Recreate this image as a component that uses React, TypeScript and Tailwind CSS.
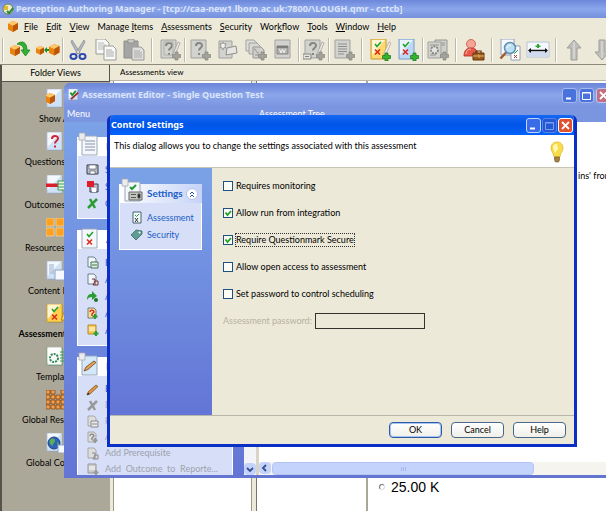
import type { ReactNode } from "react";
import clsx from "clsx";

const UI_FONT = "font-['Lato',sans-serif]";
const TITLE_FONT = "font-['Noto_Sans',sans-serif]";

type IconProps = { className?: string };

type BadgeProps = { gray?: boolean };

function PlusBadge({ gray }: BadgeProps) {
  return (
    <path
      d="M15 12h3v2.500h2.500v3H18V20h-3v-2.500h-2.500v-3H15z"
      fill={gray ? "#a3a39c" : "#35b52c"}
      stroke={gray ? "#85857e" : "#14701a"}
      strokeWidth=".7"
    />
  );
}

function Cube({ x, y, s = 1 }: { x: number; y: number; s?: number }) {
  return (
    <g transform={`translate(${x} ${y}) scale(${s})`}>
      <path d="M0 2.500 5 0l5 2v6L5 11 0 8.500z" fill="#e88310" />
      <path d="M0 2.500 5 0l5 2-5 2.800z" fill="#ffc768" />
      <path d="M5 4.800 10 2v6L5 11z" fill="#b95608" />
    </g>
  );
}

type SheetProps = {
  fill?: string;
  edge?: string;
  className?: string;
  children?: ReactNode;
};

// Document page with a soft shadow, the base of most icons here
function Sheet({ fill = "#cfe1f6", edge = "#a9bbd6", className = "size-5", children }: SheetProps) {
  return (
    <svg viewBox="0 0 20 20" className={clsx("shrink-0", className)} aria-hidden="true">
      <path d="M2 1h15v18H2z" fill="#77808c" opacity=".4" />
      <path d="M1 0h15v18H1z" fill={fill} stroke={edge} strokeWidth=".8" />
      <path d="M1.500.5H15L1.500 15z" fill="#fff" opacity=".75" />
      {children}
    </svg>
  );
}

function Marks() {
  return (
    <>
      <path d="m6 5 2 2.500L12 3" fill="none" stroke="#23a32b" strokeWidth="1.600" />
      <path d="m6 10.500 5 5m0-5-5 5" fill="none" stroke="#dc2d1e" strokeWidth="1.600" />
    </>
  );
}

function CubesArrowIcon() {
  return (
    <svg viewBox="0 0 22 20" className="h-5 w-[22px]" aria-hidden="true">
      <Cube x={1} y={5} />
      <path d="M8 4c5-4 10-2 10 6h3l-4.500 6-4.500-6h2.500c0-4-2-5-6.500-6z" fill="#30b135" stroke="#118018" strokeWidth=".7" />
    </svg>
  );
}

function CubesLinkIcon() {
  return (
    <svg viewBox="0 0 24 20" className="h-5 w-6" aria-hidden="true">
      <Cube x={0} y={6} s={0.8} />
      <Cube x={13} y={4} s={1.05} />
      <path d="m8 10 3-3v2h2v2h-2v2z" fill="#149122" />
    </svg>
  );
}

function ScissorsIcon() {
  return (
    <svg viewBox="0 0 18 20" className="h-5 w-[18px]" aria-hidden="true">
      <path d="m3 0 8 12.500-2.500 1.500L2 2zM15 0 7 12.500 9.500 14 16 2z" fill="#b4b8be" stroke="#7a7f88" strokeWidth=".6" />
      <ellipse cx="4.500" cy="16.500" rx="3" ry="2.400" fill="none" stroke="#2c49b0" strokeWidth="2" />
      <ellipse cx="13.500" cy="16.500" rx="3" ry="2.400" fill="none" stroke="#2c49b0" strokeWidth="2" />
    </svg>
  );
}

function CopyIcon() {
  return (
    <svg viewBox="0 0 22 22" className="size-[22px]" aria-hidden="true">
      <path d="M1 0h9l4 4v11H1z" fill="#f7f7f5" stroke="#9b9b98" />
      <path d="M3 4h6M3 6h8M3 8h8M3 10h8" stroke="#bbb" />
      <path d="M9 7h9l3 3v11H9z" fill="#fafaf9" stroke="#9b9b98" />
      <path d="M11 11h6M11 13h8M11 15h8M11 17h8" stroke="#aaa" />
    </svg>
  );
}

function PasteIcon() {
  return (
    <svg viewBox="0 0 22 22" className="size-[22px]" aria-hidden="true">
      <path d="M1 2h14v17H1z" fill="#a5a5a3" stroke="#8c8c89" />
      <path d="M5 0h6v4H5z" fill="#c8c8c6" stroke="#888" strokeWidth=".7" />
      <path d="M9 8h9l3 3v10H9z" fill="#dededc" stroke="#999" />
      <path d="M11 12h6M11 14h8M11 16h8M11 18h8" stroke="#aaa" />
    </svg>
  );
}

type GrayKind = "question" | "questionEdit" | "questionSet" | "form" | "stack" | "calendar" | "list" | "gear";

function GraySheet({ kind }: { kind: GrayKind }) {
  const hasQuestion = kind === "question" || kind === "questionEdit" || kind === "questionSet";
  return (
    <svg viewBox="0 0 22 22" className="size-[22px]" aria-hidden="true">
      {kind === "stack" && (
        <>
          <path d="M1 1h8l3 3v8H1z" fill="#dededb" stroke="#a2a29e" />
          <path d="M4 4h8l3 3v8H4z" fill="#d6d6d3" stroke="#a2a29e" />
          <path d="M8 8h8l3 3v8H8z" fill="#cfcfcc" stroke="#989894" />
          <path d="M9 10c3 0 1 4 5 4M10 16h5" fill="none" stroke="#8f8f8c" />
        </>
      )}
      {kind === "gear" && <path d="M8 1h12v14H8zM11 4h7M11 6h7" fill="#cfcfcc" stroke="#989894" />}
      {kind !== "stack" && (
        <path
          d={kind === "gear" ? "M1 3h13v16H1z" : kind === "form" ? "M2 2h13v17H2z" : "M2 1h15v18H2z"}
          fill="#d2d2cf"
          stroke="#a2a29e"
        />
      )}
      {hasQuestion && (
        <path d="M7 7c0-4 6-4 6-.500 0 2.500-3 2.500-3 5M10 14v2" fill="none" stroke="#858582" strokeWidth="2" />
      )}
      {kind === "questionEdit" && <path d="M5 3h9v13H5z" fill="none" stroke="#b0b0ac" />}
      {(kind === "questionEdit" || kind === "questionSet") && (
        <path d="m14 15 5-12 2 1-5 12-2 1z" fill="#e9e9e7" stroke="#989894" strokeWidth=".7" />
      )}
      {kind === "questionSet" && <path d="M0 15h8v5H0zM2 17.500h4" fill="#e3e3e0" stroke="#858582" />}
      {kind === "form" && (
        <>
          <path d="m6 3 1 2 2-.500L8 7l1 2-2-.500L6 11 5 8.500 3 9l1-2-1-2.500 2 .500z" fill="#f1f1ef" stroke="#858582" strokeWidth=".7" />
          <path d="m10 9 9-2 1 7-11 2z" fill="#e6e6e3" stroke="#8f8f8c" />
        </>
      )}
      {kind === "calendar" && (
        <>
          <path d="M4 7h11v8H4z" fill="#b1b1ae" stroke="#858582" />
          <path d="M4 8h11" stroke="#6f6f6c" strokeWidth="1.500" />
          <path d="m6.500 10 1.500 4 1.500-4 1.500 4 1.500-4" fill="none" stroke="#f3f3f1" />
        </>
      )}
      {kind === "list" && <path d="M5 5h9M5 7.500h9M5 10h9M5 12.500h9M5 15h6" stroke="#8f8f8c" />}
      {kind === "gear" && (
        <>
          <circle cx="7.500" cy="11" r="3.500" fill="#e3e3e0" stroke="#858582" strokeWidth="1.800" strokeDasharray="2 1" />
          <path d="M3 6h9M3 16h6" stroke="#929290" />
        </>
      )}
      {kind !== "calendar" && kind !== "form" && (
        <g transform="translate(1 1)">
          <PlusBadge gray />
        </g>
      )}
    </svg>
  );
}

function AssessmentAddIcon({ yellow }: { yellow?: boolean }) {
  return (
    <svg viewBox="0 0 22 22" className="size-[22px]" aria-hidden="true">
      <path d="M2 0h15v20H2z" fill={yellow ? "#ffd970" : "#bcd9f8"} stroke={yellow ? "#c59a34" : "#7d9cc5"} />
      <path d="M3 1h13L3 16z" fill="#fff" opacity=".7" />
      <Marks />
      {yellow && <path d="m15 14 5-11 2 1-5 11-2 1z" fill="#f6f1e3" stroke="#a6a196" strokeWidth=".7" />}
      <g transform="translate(1 2)">
        <PlusBadge />
      </g>
    </svg>
  );
}

function UserCaseIcon() {
  return (
    <svg viewBox="0 0 22 22" className="size-[22px]" aria-hidden="true">
      <circle cx="8" cy="5" r="4.500" fill="#f3a598" stroke="#c9503f" strokeWidth=".8" />
      <path d="M1 17c0-6 3-8 7-8s7 2 7 8z" fill="#e8594a" stroke="#b52c22" strokeWidth=".8" />
      <path d="M3 15c0-3 2-5 5-5" fill="none" stroke="#f8b5aa" />
      <path d="M10 14h11v7H10z" fill="#9c5a20" stroke="#683708" />
      <path d="M13 14v-2h5v2" fill="none" stroke="#683708" strokeWidth="1.200" />
      <path d="M10 17h11M15 16h1v3" stroke="#e6b964" />
    </svg>
  );
}

function PreviewIcon() {
  return (
    <svg viewBox="0 0 22 22" className="size-[22px]" aria-hidden="true">
      <path d="M2 0h13v16H2z" fill="#f5f9ff" stroke="#8fa0b8" />
      <path d="M12 7h9v14h-9z" fill="#fff" stroke="#8fa0b8" />
      <path d="m14 13 1.500 1.500L19 11" stroke="#259b36" fill="none" />
      <path d="m15 16 3 3m0-3-3 3" stroke="#c33" fill="none" />
      <circle cx="11" cy="9" r="5.500" fill="#bfe0f4" stroke="#5d8fb0" strokeWidth="1.500" />
      <path d="M8 9c0-2 2-3 4-3" fill="none" stroke="#fff" />
      <path d="m7 13.500-5.500 6" stroke="#9b5b32" strokeWidth="2.500" />
    </svg>
  );
}

function RulerIcon() {
  return (
    <svg viewBox="0 0 24 18" className="h-[18px] w-6" aria-hidden="true">
      <path d="M1 1h22v15H1z" fill="#f4f7fc" stroke="#b7c2d4" />
      <path d="M2 11h20v4.500H2z" fill="#d0dbf0" />
      <path d="M3 9.500h18" stroke="#111" strokeWidth="1.500" />
      <path d="m2 9.500 3-2.500v5zM22 9.500 19 7v5z" fill="#111" />
      <path d="M11 3h2v1.500h1.500V6H13v1h-2V6H9.500V4.500H11z" fill="#2aa532" />
    </svg>
  );
}

function MoveArrow({ down }: { down?: boolean }) {
  return (
    <svg viewBox="0 0 16 22" className={clsx("h-[22px] w-4", down && "rotate-180")} aria-hidden="true">
      <path d="M8 1 15 9h-4v12H5V9H1z" fill="#bfbfbc" stroke="#9d9d9a" />
      <path d="M8 3v17" stroke="#d2d2cf" strokeWidth="2" />
    </svg>
  );
}

function Tool({ label, children }: { label: string; children: ReactNode }) {
  return (
    <button type="button" aria-label={label} className="flex h-full w-7 shrink-0 items-center justify-center">
      {children}
    </button>
  );
}

function Divider({ wide }: { wide?: boolean }) {
  return (
    <div className={clsx("flex h-6 shrink-0 justify-center", wide ? "w-2" : "w-0.5")}>
      <div className="w-0.5 border-r border-white bg-[#bdb9a6]" />
    </div>
  );
}

const menus = [
  ["", "F", "ile"],
  ["", "E", "dit"],
  ["", "V", "iew"],
  ["Manage ", "I", "tems"],
  ["", "A", "ssessments"],
  ["", "S", "ecurity"],
  ["Wor", "k", "flow"],
  ["", "T", "ools"],
  ["", "W", "indow"],
  ["", "H", "elp"],
];

function MenuBar() {
  return (
    <nav className="flex h-[18px] shrink-0 items-center gap-2 pl-1 text-[9px]">
      <svg viewBox="0 0 12 12" className="-mr-1 ml-1 size-3" aria-hidden="true">
        <Cube x={0} y={0} />
      </svg>
      {menus.map(([before, key, after]) => (
        <button key={key + after} type="button" className="whitespace-nowrap">
          {before}
          <span className="underline">{key}</span>
          {after}
        </button>
      ))}
    </nav>
  );
}

function ToolBar() {
  return (
    <div className="flex h-[29px] shrink-0 items-center overflow-hidden border-b border-[#8d8a79]">
      <div className="flex w-1.5 shrink-0 justify-center">
        <div className="h-6 w-0.5 border-r border-white bg-[#bdb9a6]" />
      </div>
      <Tool label="Connect"><CubesArrowIcon /></Tool>
      <Tool label="Link"><CubesLinkIcon /></Tool>
      <Divider />
      <Tool label="Cut"><ScissorsIcon /></Tool>
      <Tool label="Copy"><CopyIcon /></Tool>
      <Tool label="Paste"><PasteIcon /></Tool>
      <Divider wide />
      <Tool label="Question wizard"><GraySheet kind="questionEdit" /></Tool>
      <Divider />
      <Tool label="New question"><GraySheet kind="question" /></Tool>
      <Tool label="New topic"><GraySheet kind="form" /></Tool>
      <Tool label="New outcome"><GraySheet kind="stack" /></Tool>
      <Tool label="Schedule"><GraySheet kind="calendar" /></Tool>
      <Divider />
      <Tool label="Edit question"><GraySheet kind="questionSet" /></Tool>
      <Divider />
      <Tool label="New list"><GraySheet kind="list" /></Tool>
      <Divider wide />
      <Tool label="Assessment wizard"><AssessmentAddIcon yellow /></Tool>
      <Tool label="New assessment"><AssessmentAddIcon /></Tool>
      <Divider />
      <Tool label="New template"><GraySheet kind="gear" /></Tool>
      <Divider wide />
      <Tool label="Roles"><UserCaseIcon /></Tool>
      <Divider wide />
      <Tool label="Preview"><PreviewIcon /></Tool>
      <Tool label="Size"><RulerIcon /></Tool>
      <Divider wide />
      <Tool label="Move up"><MoveArrow /></Tool>
      <Tool label="Move down"><MoveArrow down /></Tool>
    </div>
  );
}

function GridCubes({ dense }: { dense?: boolean }) {
  const cells = dense ? [0, 5, 10, 15] : [0, 10];
  return (
    <svg viewBox="0 0 20 20" className="size-5" aria-hidden="true">
      {cells.map((y) =>
        cells.map((x) =>
          // the dense grid has a notch in its top row
          dense && y === 0 && x === 10 ? null : (
            <path
              key={`${x}-${y}`}
              d={dense ? `M${x} ${y}h4v4h-4z` : `M${x} ${y}h8v8h-8z`}
              fill={dense ? "#f0a050" : "#ffa01e"}
              stroke={dense ? "#8a4a12" : "#e8d6a8"}
              strokeWidth=".8"
            />
          )
        )
      )}
    </svg>
  );
}

const folders: { label: string; icon: ReactNode; active?: boolean }[] = [
  {
    label: "Show All",
    icon: (
      <Sheet>
        <Cube x={-1} y={4} />
      </Sheet>
    ),
  },
  {
    label: "Questions Bank",
    icon: (
      <Sheet>
        <path d="M6 7c0-4 6-4 6-.500 0 2.500-3 2-3 5M9 13.500v2" fill="none" stroke="#cf2433" strokeWidth="2" />
      </Sheet>
    ),
  },
  {
    label: "Outcomes Bank",
    icon: (
      <Sheet>
        <path d="M0 8.500h12v3.500H0z" fill="#d9202a" />
        <path d="M12 6h7v9h-7z" fill="#e5f4e6" stroke="#3c9c4b" />
        <path d="M12 9h7M12 12h7" stroke="#3c9c4b" />
      </Sheet>
    ),
  },
  { label: "Resources Bank", icon: <GridCubes /> },
  {
    label: "Content Items",
    icon: (
      <Sheet>
        <path d="M3 4h5M3 6h5M3 8h5M3 10h5M3 12h5" stroke="#9bb0cd" />
        <path d="M9 9h10v10H9z" fill="#f5f9ff" stroke="#8da3c2" />
      </Sheet>
    ),
  },
  {
    label: "Assessment Folder",
    active: true,
    icon: (
      <Sheet fill="#ffcf4d" edge="#c79928">
        <Marks />
        <path d="m15 16 4-10 1 10z" fill="#f6cf55" stroke="#b98c22" />
      </Sheet>
    ),
  },
  {
    label: "Templates",
    icon: (
      <Sheet fill="#f7fbf7" edge="#6d9a78">
        <circle cx="8" cy="11" r="4" fill="none" stroke="#36865a" strokeWidth="2" strokeDasharray="2 1" />
        <path d="M14 5h5M14 8h5M14 11h5M14 14h5" stroke="#3ba05d" />
      </Sheet>
    ),
  },
  { label: "Global Resources", icon: <GridCubes dense /> },
  {
    label: "Global Content",
    icon: (
      <Sheet>
        <circle cx="8" cy="10" r="6" fill="#3261bb" stroke="#1d4086" />
        <path d="M4 7c3-3 5-1 5 1s-3 2-2 5c-3-1-4-4-3-6zM11 9l2 1-1 4z" fill="#58b15a" />
        <path d="M12 12h8v8h-8z" fill="#f5f9ff" stroke="#8da3c2" />
      </Sheet>
    ),
  },
];

function FolderViews() {
  return (
    <aside className="flex w-[110px] shrink-0 flex-col border-l-2 border-[#55534a]">
      <h2 className="flex h-[17px] shrink-0 items-center justify-center border-r border-b border-[#55534a] text-[9px]">Folder Views</h2>
      <div className="flex grow flex-col items-center bg-[#aca899] pt-[7px]">
        {folders.map((folder) => (
          <button key={folder.label} type="button" className="flex h-[43px] shrink-0 flex-col items-center whitespace-nowrap text-[9px]">
            {folder.icon}
            <span className={clsx("pt-0.5 leading-4", folder.active && "font-bold")}>{folder.label}</span>
          </button>
        ))}
      </div>
    </aside>
  );
}

type CaptionProps = { kind: "min" | "max" | "close"; tone: "active" | "inactive" | "disabled" };

function CaptionButton({ kind, tone }: CaptionProps) {
  return (
    <button
      type="button"
      aria-label={kind}
      className={clsx(
        "flex size-[15px] shrink-0 items-center justify-center rounded-[3px] border",
        kind === "close" && tone === "active" && "border-white bg-[#e2512e]",
        kind === "close" && tone === "inactive" && "border-[#b9c6ef] bg-[#c17084]",
        kind !== "close" && tone === "active" && "border-[#c5d5fb] bg-[#3a6be8]",
        kind !== "close" && tone === "inactive" && "border-[#a6b9ef] bg-[#4a72dc]",
        tone === "disabled" && "border-[#5584e8] bg-[#2458d4]"
      )}
    >
      <svg viewBox="0 0 11 11" className="size-[11px]" fill="none" stroke={tone === "disabled" ? "#7d9fec" : "#fff"} aria-hidden="true">
        {kind === "min" && <path d="M2 8.500h5" strokeWidth="2" />}
        {kind === "max" && <path d="M1.500 2.500h8v7h-8zM1 3h9" />}
        {kind === "close" && <path d="m2 2 7 7m0-7-7 7" strokeWidth="1.800" />}
      </svg>
    </button>
  );
}

type GlyphKind = "save" | "saveClose" | "close" | "page" | "props" | "arrow" | "question" | "note" | "pencil" | "tag";

function Glyph({ kind, gray }: { kind: GlyphKind; gray?: boolean }) {
  const green = gray ? "#999" : "#2c9c35";
  return (
    <svg viewBox="0 0 13 13" className={clsx("size-[13px] shrink-0", gray && "grayscale")} aria-hidden="true">
      {kind === "save" && (
        <>
          <path d="M1 2h11v9H1z" fill="#b8bcc8" stroke="#3b3f4c" />
          <path d="M3 2h7v4H3zM4 8h5v3H4z" fill="#fff" stroke="#4d515e" strokeWidth=".6" />
        </>
      )}
      {kind === "saveClose" && (
        <>
          <path d="M4 4h8v8H4z" fill="#b8bcc8" stroke="#3b3f4c" />
          <path d="M6 8h4v4H6z" fill="#fff" />
          <path d="M1 1h7v6H1z" fill="#e11d2c" />
        </>
      )}
      {kind === "close" && <path d="m2 11 9-9M4 2l5 9" stroke={green} strokeWidth="2.500" />}
      {(kind === "page" || kind === "props" || kind === "question") && (
        <path d="M2 1h6l2 2v8H2z" fill={gray ? "#ddd" : kind === "question" ? "#ffdf87" : "#f2f7fb"} stroke={gray ? "#999" : "#4e6475"} strokeWidth=".8" />
      )}
      {kind === "page" && <path d="M5 6h7v6H5zM6 9h5" fill="#dff0df" stroke={gray ? "#888" : "#46705a"} />}
      {kind === "props" && <path d="M6 6h3v6M9 8h3v4H7z" fill="#e9d7da" stroke={gray ? "#888" : "#6a3740"} />}
      {kind === "question" && (
        <>
          <path d="M4 5c0-3 4-2 4 0L6 7v2" fill="none" stroke={gray ? "#888" : "#d92231"} strokeWidth="1.400" />
          <path d="M9 7v5M6.500 9.500h5" stroke={green} strokeWidth="2" />
        </>
      )}
      {kind === "arrow" && (
        <>
          <path d="M1 10c0-5 2-6 5-6V1l5 5-5 4V7c-3 0-4 1-5 3z" fill={green} />
          <circle cx="10" cy="10" r="2" fill="#1e7426" />
        </>
      )}
      {kind === "note" && (
        <>
          <path d="M2 1h8v9H2z" fill={gray ? "#ccc" : "#f7cb55"} stroke={gray ? "#999" : "#b8892c"} />
          <path d="M3 4h6M3 6h6" stroke="#fff" />
          <path d="M10 7v5M7.500 9.500h5" stroke={green} strokeWidth="2" />
        </>
      )}
      {kind === "pencil" && (
        <>
          <path d="m1 12 1.500-3.500L10 2l2 1.500-8 7.500z" fill={gray ? "#aaa" : "#e2953c"} stroke={gray ? "#888" : "#74431a"} strokeWidth=".7" />
          <path d="m1 12 1-2.500L3.500 11z" fill="#222" />
        </>
      )}
      {kind === "tag" && (
        <>
          <path d="m1 7 5-5 6 1v3l-6 6z" fill="#5f9c92" stroke="#396b64" strokeWidth=".8" />
          <circle cx="9.500" cy="4.500" r="1" fill="#fff" />
        </>
      )}
    </svg>
  );
}

type TaskItem = { label: string; glyph: GlyphKind; gray?: boolean };

const taskGroups: { title: string; head: GlyphKind; tight?: boolean; items: TaskItem[] }[] = [
  {
    title: "File",
    head: "page",
    items: [
      { label: "Save", glyph: "save" },
      { label: "Save and Close", glyph: "saveClose" },
      { label: "Close", glyph: "close" },
    ],
  },
  {
    title: "Assessment",
    head: "props",
    items: [
      { label: "Edit Properties", glyph: "page" },
      { label: "Add Block", glyph: "props" },
      { label: "Add Jump", glyph: "arrow" },
      { label: "Add Question", glyph: "question" },
      { label: "Add Note", glyph: "note" },
    ],
  },
  {
    title: "Edit",
    head: "pencil",
    tight: true,
    items: [
      { label: "Edit Item", glyph: "pencil" },
      { label: "Delete", glyph: "close", gray: true },
      { label: "Preview", glyph: "page", gray: true },
      { label: "Add Question", glyph: "question", gray: true },
      { label: "Add Prerequisite", glyph: "props", gray: true },
      { label: "Add  Outcome  to  Reporte...", glyph: "note", gray: true },
    ],
  },
];

function HeadIcon({ kind }: { kind: GlyphKind }) {
  return (
    <svg viewBox="0 0 22 24" className="h-6 w-[22px] shrink-0" aria-hidden="true">
      <path d="M4 4h15v19H4z" fill={kind === "pencil" ? "#d3e8fb" : "#f4f7fb"} stroke="#9aa7bb" />
      {kind !== "props" && <path d="M1 1h6v7H1z" fill="#ececee" stroke="#aaaab2" strokeWidth=".8" />}
      {kind === "page" && <path d="M7 9h10M7 12h10M7 15h10M7 18h10" stroke="#8390a8" />}
      {kind === "props" && (
        <g transform="translate(3 4)">
          <Marks />
        </g>
      )}
      {kind === "pencil" && <path d="m6 19 2-4 8-6 2 1.500-8 7z" fill="#e4a452" stroke="#6d4020" strokeWidth=".8" />}
      {kind === "save" && (
        <>
          <path d="m9 9 2 2 4-4" fill="none" stroke="#259b36" strokeWidth="2" />
          <path d="M8 14h13v8H8z" fill="#c3c5bf" stroke="#6a6a66" />
          <path d="M10 16.500h5M10 19.500h5M17 16h2v4h-2z" stroke="#555" />
        </>
      )}
    </svg>
  );
}

function TaskGroup({ title, head, tight, items }: (typeof taskGroups)[number]) {
  return (
    <section className="shrink-0">
      <h3 className="flex h-[19px] items-end bg-white pl-px text-[10px] font-bold text-[#215dc6]">
        <HeadIcon kind={head} />
        <span className="pl-1.5 leading-[19px]">{title}</span>
      </h3>
      <ul className="border border-t-0 border-white bg-[#d6dff7] pt-[5px] pb-1.5 text-[9px]">
        {items.map((item) => (
          <li key={item.label} className={tight ? "h-4" : "h-[17px]"}>
            <button
              type="button"
              className={clsx("flex h-full items-center gap-1.5 pl-2 whitespace-pre", item.gray ? "text-[#a0a2ae]" : "text-[#215dc6]")}
            >
              <Glyph kind={item.glyph} gray={item.gray} />
              {item.label}
            </button>
          </li>
        ))}
      </ul>
    </section>
  );
}

function ScrollArrow({ left }: { left?: boolean }) {
  return (
    <button type="button" aria-label={left ? "Scroll left" : "Scroll down"} className="flex size-3 shrink-0 items-center justify-center rounded-sm bg-[#c4d3fc]">
      <svg viewBox="0 0 8 8" className="size-2" fill="none" stroke="#36508a" strokeWidth="1.800" aria-hidden="true">
        <path d={left ? "M5 1 2 4l3 3" : "m1 3 3 3 3-3"} />
      </svg>
    </button>
  );
}

function EditorWindow() {
  return (
    <section className="absolute top-[83px] -right-2 left-16 flex h-[395px] flex-col overflow-hidden rounded-t-md border-b-[3px] border-[#6375d0] bg-[#7b96e0]">
      <header className="flex h-6 shrink-0 items-center gap-0.5 bg-linear-to-b from-[#6b84d8] via-[#8ba6ea] to-[#7b94e0] pr-[3px] pl-1">
        <Sheet className="size-3">
          <path d="m4 6 3 4 6-7" fill="none" stroke="#24932e" strokeWidth="3" />
          <path d="M5 17 17 6" stroke="#a02a21" strokeWidth="3" />
        </Sheet>
        <h2 className={clsx("grow text-[9px] font-bold text-[#dbe4fb]", TITLE_FONT)}>Assessment Editor - Single Question Test</h2>
        <CaptionButton kind="min" tone="inactive" />
        <CaptionButton kind="max" tone="inactive" />
        <CaptionButton kind="close" tone="inactive" />
      </header>
      <div className="flex min-h-0 grow">
        <div className="flex w-48 shrink-0 flex-col">
          <p className="h-[15px] shrink-0 pl-[3px] text-[9px] leading-[13px] text-white">Menu</p>
          <div className="flex min-h-0 grow">
            <div className="flex grow flex-col gap-[11px] overflow-hidden bg-linear-to-b from-[#7ba2e7] to-[#6375d6] pt-[15px] pr-[11px] pl-[13px]">
              {taskGroups.map((group) => (
                <TaskGroup key={group.title} {...group} />
              ))}
            </div>
            <div className="flex w-3 shrink-0 items-end bg-[#f3f4f8]">
              <ScrollArrow />
            </div>
          </div>
        </div>
        <div className="flex grow flex-col">
          <p className="h-[15px] shrink-0 pl-[3px] text-[9px] leading-[13px] text-white">Assessment Tree</p>
          <div className="flex min-h-0 grow flex-col border-l-[3px] border-[#d8d5c6] bg-white">
            <p className="grow pt-[46px] pr-0.5 text-right text-[9px] leading-4">ins' from</p>
            <div className="flex h-[13px] bg-[#f5f4ee]">
              <ScrollArrow left />
              <div className="mx-px flex w-[262px] items-center justify-center gap-px rounded-sm border border-[#b3c5f5] bg-[#c4d3fc]">
                <div className="h-1 w-px bg-[#a3b8ee]" />
                <div className="h-1 w-px bg-[#a3b8ee]" />
                <div className="h-1 w-px bg-[#a3b8ee]" />
              </div>
            </div>
          </div>
        </div>
      </div>
    </section>
  );
}

const options = [
  { id: "monitoring", label: "Requires monitoring" },
  { id: "integration", label: "Allow run from integration", checked: true },
  { id: "secure", label: "Require Questionmark Secure", checked: true, focused: true },
  { id: "open", label: "Allow open access to assessment" },
  { id: "scheduling", label: "Set password to control scheduling" },
];

function OptionRow({ id, label, checked, focused }: { id: string; label: string; checked?: boolean; focused?: boolean }) {
  return (
    <div className="flex h-[27px] items-center gap-0.5">
      <span className="relative size-2.5">
        <input id={id} type="checkbox" defaultChecked={checked} className="peer block size-2.5 appearance-none border border-[#1c5180] bg-[#fbfbf8]" />
        <svg viewBox="0 0 10 10" className="pointer-events-none absolute inset-0 hidden size-2.5 peer-checked:block" aria-hidden="true">
          <path d="m2.500 4.500 2 2.500 3.500-4" fill="none" stroke="#21a121" strokeWidth="1.800" />
        </svg>
      </span>
      <label htmlFor={id} className={clsx("border text-[9px] leading-3", focused ? "border-dotted border-[#333]" : "border-transparent")}>
        {label}
      </label>
    </div>
  );
}

function LightBulb({ className }: IconProps) {
  return (
    <svg viewBox="0 0 14 22" className={className} aria-hidden="true">
      <path d="M7 1c4 0 6 3 6 6 0 4-3 5-3 9H4c0-4-3-5-3-9 0-3 2-6 6-6z" fill="#f8dc4c" stroke="#e0b62c" strokeWidth=".8" />
      <path d="M3 6c0-2 2-3 4-3l1 5-3 4z" fill="#fff8b5" />
      <path d="M4.500 16h5v3l-1 2h-3l-1-2z" fill="#a5833c" stroke="#6b5425" strokeWidth=".6" />
    </svg>
  );
}

function ControlSettingsDialog() {
  return (
    <section
      role="dialog"
      aria-labelledby="dialog-title"
      className="absolute top-[115px] left-[107px] flex h-[332px] w-[470px] flex-col overflow-hidden rounded-t-md border-x-[3px] border-b-[3px] border-[#0a2fc4] bg-[#ece9d8]"
    >
      <header className="flex h-5 shrink-0 items-center gap-px bg-linear-to-b from-[#1667f3] via-[#0054e6] to-[#0462fb] pr-px pl-px">
        <h2 id="dialog-title" className={clsx("grow text-[9px] font-bold text-white", TITLE_FONT)}>Control Settings</h2>
        <CaptionButton kind="min" tone="active" />
        <CaptionButton kind="max" tone="disabled" />
        <CaptionButton kind="close" tone="active" />
      </header>
      <div className="flex h-[33px] shrink-0 justify-between border-b border-[#c8c5b4] bg-white pt-1 pr-2.5 pl-1">
        <p className="text-[9px] leading-[14px]">This dialog allows you to change the settings associated with this assessment</p>
        <LightBulb className="mt-0.5 h-[22px] w-3.5" />
      </div>
      <div className="flex grow">
        <aside className="w-[102px] shrink-0 bg-linear-to-b from-[#7ba2e7] to-[#6375d6] pt-4 pr-2.5 pl-[9px]">
          <h3 className="flex h-[19px] items-center bg-linear-to-r from-white to-[#c6d3f7] pl-0.5 text-[10px] font-bold text-[#215dc6]">
            <span className="-mt-2 mr-1"><HeadIcon kind="save" /></span>
            <span className="grow">Settings</span>
            <button type="button" aria-label="Collapse" className="mr-1 flex size-3 items-center justify-center rounded-full border border-[#b4c2e8] bg-white">
              <svg viewBox="0 0 8 8" className="size-2" fill="none" stroke="#2850a8" aria-hidden="true">
                <path d="m2 4 2-2 2 2M2 7l2-2 2 2" />
              </svg>
            </button>
          </h3>
          <ul className="border border-t-0 border-white bg-[#d6dff7] pt-1.5 pb-1.5 text-[9px] text-[#215dc6]">
            <li className="h-[17px]">
              <a href="#assessment" className="flex h-full items-center gap-1 pl-2.5">
                <svg viewBox="0 0 13 13" className="size-[13px]" aria-hidden="true">
                  <path d="M3 1h8v11H3z" fill="#f4fafc" stroke="#47606f" />
                  <path d="m5 4 1.500 1.500L9 3" fill="none" stroke="#259b36" />
                  <path d="m5 7 3 4m0-4-3 4" stroke="#333" />
                </svg>
                Assessment
              </a>
            </li>
            <li className="h-[17px]">
              <a href="#security" className="flex h-full items-center gap-1 pl-2.5">
                <Glyph kind="tag" />
                Security
              </a>
            </li>
          </ul>
        </aside>
        <form className="flex grow flex-col">
          <div className="grow pt-1 pl-[11px]">
            {options.map((option) => (
              <OptionRow key={option.id} {...option} />
            ))}
            <div className="flex items-center gap-1 pt-1.5">
              <label htmlFor="password" className="w-[88px] text-[9px] leading-3 whitespace-nowrap text-[#b5b2a1]">Assessment password:</label>
              <input id="password" type="password" disabled className="h-4 w-[110px] border border-[#33322c] bg-transparent" />
            </div>
          </div>
        </form>
      </div>
      <footer className="flex h-[29px] shrink-0 items-center justify-end gap-[9px] border-t border-[#b8b6aa] bg-[#ece9d8] pr-2 text-[9px]">
        {["OK", "Cancel", "Help"].map((label, i) => (
          <button
            key={label}
            type="button"
            className={clsx(
              "h-4 w-[53px] rounded-sm border bg-linear-to-b from-white to-[#f0efe8] leading-3",
              i === 0 ? "border-[#2a5ba8] ring-1 ring-[#a9c4f2] ring-inset" : "border-[#46688c]"
            )}
          >
            {label}
          </button>
        ))}
      </footer>
    </section>
  );
}

export default function App() {
  return (
    <main className={clsx("relative flex h-screen flex-col overflow-hidden bg-[#ece9d8] text-black", UI_FONT)}>
      <header className="flex h-[18px] shrink-0 items-center gap-0.5 bg-linear-to-b from-[#6d87da] via-[#8ba7ec] to-[#7690dd] pl-0.5">
        <svg viewBox="0 0 12 12" className="size-3 shrink-0" aria-hidden="true">
          <circle cx="6" cy="6" r="5" fill="#e9efcc" stroke="#6b7d43" />
          <path d="M2 3h4v4H2z" fill="#e3b934" />
          <path d="m5 8 2 2 4-5" fill="none" stroke="#2a8a35" strokeWidth="2" />
        </svg>
        <h1 className={clsx("text-[9px] font-bold whitespace-nowrap text-[#dbe4fb]", TITLE_FONT)}>
          Perception Authoring Manager - [tcp://caa-new1.lboro.ac.uk:7800/\LOUGH.qmr - cctcb]
        </h1>
      </header>
      <MenuBar />
      <ToolBar />
      <div className="flex min-h-0 grow">
        <FolderViews />
        <div className="flex grow flex-col">
          <h2 className="h-[15px] shrink-0 pl-2.5 text-[8px] leading-[14px]">Assessments view</h2>
          <div className="flex grow gap-1 border-t border-[#bab7a8] pl-[3px]">
            <div className="w-[139px] shrink-0 border-x border-[#9c998a] bg-white" />
            <div className="flex grow border-l border-[#77756a] bg-white">
              <div className="w-[111px] border-r-2 border-[#aaa798]" />
              <div className="flex grow flex-col justify-end pb-3.5 pl-[11px]">
                <label className="flex items-center gap-1.5 font-['Liberation_Sans',sans-serif] text-[14px] leading-5">
                  <input type="radio" name="answer" className="size-1.5 appearance-none rounded-full border border-r-[#ddd] border-b-[#ddd] border-[#777]" />
                  25.00 K
                </label>
              </div>
            </div>
          </div>
        </div>
      </div>
      <EditorWindow />
      <ControlSettingsDialog />
    </main>
  );
}
